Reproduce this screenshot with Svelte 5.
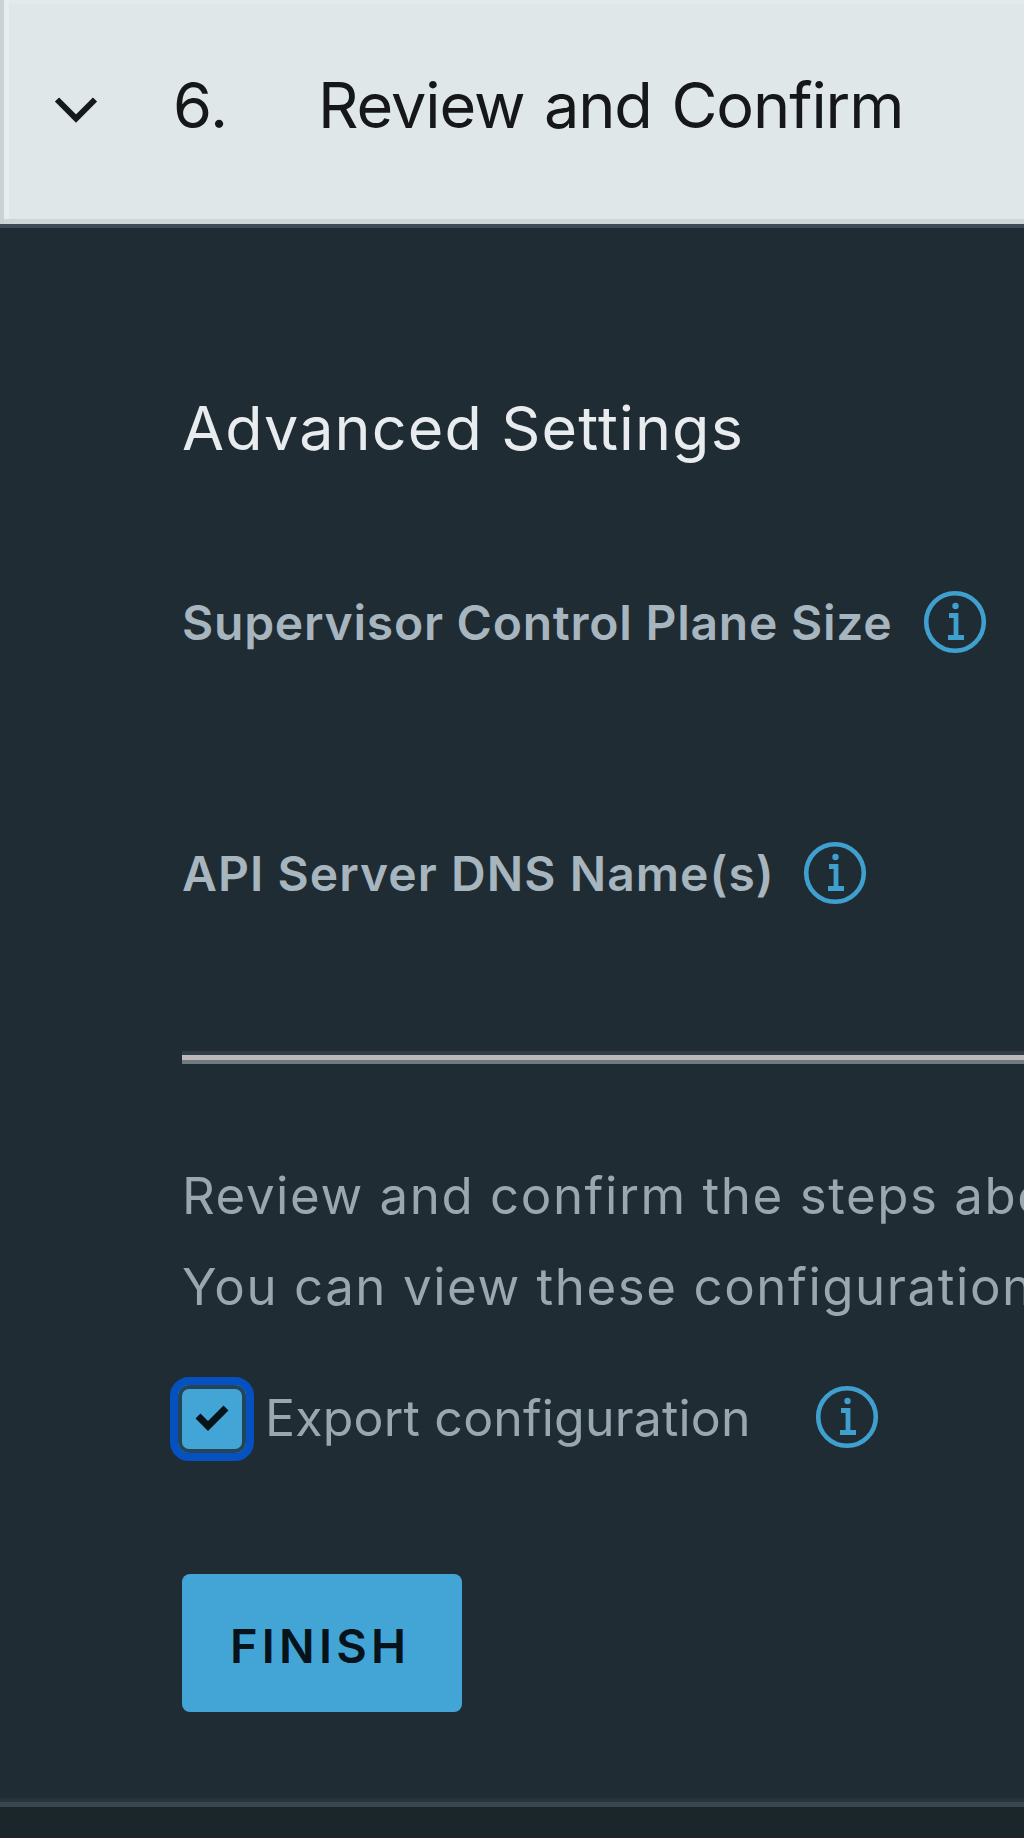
<script>
  const settings = [
    { label: 'Supervisor Control Plane Size', name: 'size' },
    { label: 'API Server DNS Name(s)', name: 'dns' }
  ];
  let exportConfig = $state(true);
</script>

{#snippet info()}
  <svg class="info" viewBox="0 0 64 64" fill="none" stroke="#3f9fcf" aria-hidden="true">
    <circle cx="32" cy="32" r="28.8" stroke-width="4.6" />
    <circle cx="32.5" cy="16" r="3.2" fill="#3f9fcf" stroke="none" />
    <path d="M26 25.5H33V47M25 47.5H41" stroke-width="4.8" />
  </svg>
{/snippet}

<main class="wizard">
  <header class="step">
    <svg class="chevron" viewBox="0 0 44 28" fill="none" aria-hidden="true">
      <path d="M3 3.5L22 22.5L41 3.5" stroke="#15191b" stroke-width="6" />
    </svg>
    <span class="number">6.</span>
    <h1>Review and Confirm</h1>
  </header>

  <section class="content">
    <h2>Advanced Settings</h2>
    {#each settings as item}
      <div class="setting {item.name}"><span>{item.label}</span>{@render info()}</div>
    {/each}
    <hr />
    <div class="summary">
      <p>Review and confirm the steps abo</p>
      <p>You can view these configuration</p>
    </div>
    <div class="export">
      <button class="check" role="checkbox" aria-checked={exportConfig} aria-label="Export configuration" onclick={() => (exportConfig = !exportConfig)}>
        {#if exportConfig}
          <svg viewBox="0 0 34 28" fill="none" aria-hidden="true">
            <path d="M3 12L13 22L31 4" stroke="#06131b" stroke-width="7" />
          </svg>
        {/if}
      </button>
      <span>Export configuration</span>
      {@render info()}
    </div>
    <button class="finish">FINISH</button>
  </section>
  <footer></footer>
</main>

<style>
  :global(body) { margin: 0; background: #1b262b; overflow: hidden; }
  * { box-sizing: border-box; }
  .wizard {
    width: 1024px;
    height: 1838px;
    overflow: hidden;
    display: flex;
    flex-direction: column;
    font-family: Inter, "Liberation Sans", sans-serif;
    background: #202c34;
  }
  .step {
    height: 228px;
    flex: none;
    display: flex;
    align-items: center;
    padding: 0 0 14px 54px;
    color: #151718;
    background: #dfe7e9;
    border-bottom: 4px solid #3e4b56;
    box-shadow: inset 4px 0 #cad2d5, inset 0 -5px #cdd5d8, inset 9px 0 #e7edef, inset 0 4px #e4eaec;
  }
  .chevron { width: 44px; height: 28px; margin-top: 10px; flex: none; }
  .number { width: 145px; margin-left: 75px; font-size: 63px; letter-spacing: 0; flex: none; }
  h1, h2, p { margin: 0; font-weight: 400; white-space: nowrap; }
  h1 { font-size: 63px; line-height: 80px; letter-spacing: -1.1px; word-spacing: 3px; }
  .content {
    height: 1570px;
    flex: none;
    padding: 160px 0 0 182px;
    display: flex;
    flex-direction: column;
    align-items: flex-start;
  }
  h2 { font-size: 61px; line-height: 80px; letter-spacing: 1.15px; color: #e8ecef; }
  .setting {
    height: 64px;
    display: flex;
    align-items: center;
    font-size: 48px;
    font-weight: 600;
    color: #a7b5be;
    white-space: nowrap;
  }
  .setting span { flex: none; }
  .size { margin-top: 122px; }
  .size span { width: 741px; letter-spacing: 0.76px; }
  .dns { margin-top: 187px; }
  .dns span { width: 621px; letter-spacing: 1.05px; }
  .info { width: 64px; height: 64px; flex: none; }
  hr {
    width: 842px;
    height: 13px;
    flex: none;
    margin: 146px 0 0;
    border: solid #303d45;
    border-width: 4px 0 0;
    border-bottom: 4px solid #6f7a80;
    background: #bdb9ba;
  }
  .summary {
    margin-top: 86px;
    width: 842px;
    overflow: hidden;
    font-size: 51px;
    line-height: 91px;
    letter-spacing: 1.55px;
    color: #99a7b0;
  }
  .export {
    height: 84px;
    margin: 45px 0 0 -12px;
    display: flex;
    align-items: center;
    font-size: 50px;
    letter-spacing: 0.2px;
    color: #99a7b0;
    white-space: nowrap;
  }
  .export span { width: 550px; margin: -2px 0 0 11px; flex: none; }
  .export .info { margin-top: -5px; }
  .check {
    width: 84px;
    height: 84px;
    flex: none;
    display: grid;
    place-items: center;
    padding: 0 0 2px;
    border: 8px solid #0551c0;
    border-radius: 19px;
    background: #43a5d6;
    box-shadow: inset 0 0 0 4px #234557;
  }
  .check svg { width: 34px; height: 28px; }
  .finish {
    width: 280px;
    height: 138px;
    margin-top: 113px;
    padding: 4px 0 0 48px;
    border: 0;
    border-radius: 8px;
    background: #43a5d6;
    color: #06131b;
    font: 600 47px Inter, "Liberation Sans", sans-serif;
    letter-spacing: 4.2px;
    text-align: left;
  }
  footer { flex: 1; background: #1b262b; border-top: 5px solid #3a4751; box-shadow: 0 -4px #26343c; margin-top: 4px; }
</style>
